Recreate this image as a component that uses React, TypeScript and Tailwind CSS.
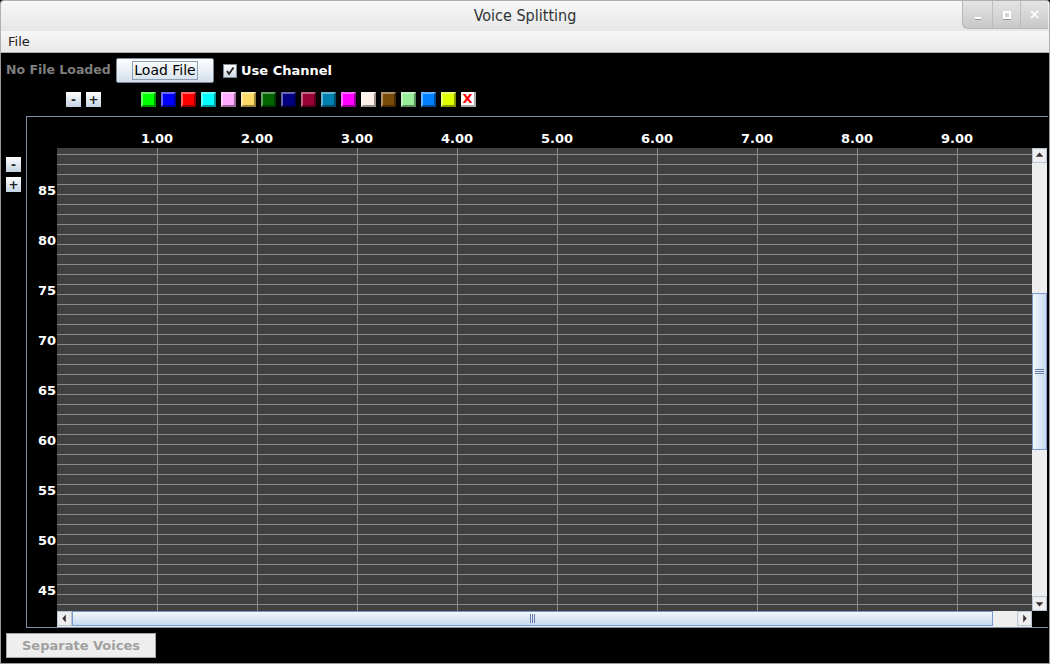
import React from "react";

const swatches = [
  "#00ff00", "#0000ff", "#ff0000", "#00ffff", "#ffaaff", "#ffd966",
  "#006400", "#000080", "#990033", "#0080b0", "#ff00ff", "#fff0ea",
  "#7a4a08", "#99ee99", "#0080ff", "#ddff00",
];

const cols = ["1.00", "2.00", "3.00", "4.00", "5.00", "6.00", "7.00", "8.00", "9.00"];
const rows = ["85", "80", "75", "70", "65", "60", "55", "50", "45"];

function MiniButton({ label }: { label: string }) {
  return (
    <div className="w-[15px] h-[15px] flex items-center justify-center bg-gradient-to-b from-white to-[#c5d3e2] text-[12px] font-bold leading-none text-[#222]">
      {label}
    </div>
  );
}

function Swatch({ color }: { color: string }) {
  return (
    <div
      className="w-[15px] h-[15px] border-t-2 border-l-2 border-b-2 border-r-2 border-t-white/40 border-l-white/40 border-b-black/40 border-r-black/40"
      style={{ backgroundColor: color }}
    />
  );
}

function Grid() {
  const w = 975;
  const h = 463;
  const hLines = [];
  for (let y = 6; y < h; y += 10) hLines.push(y);
  const vLines = [];
  for (let x = 100; x < w; x += 100) vLines.push(x);
  return (
    <svg width={w} height={h} className="block shrink-0">
      <rect width={w} height={h} fill="#404040" />
      {hLines.map((y) => (
        <line key={"h" + y} x1={0} x2={w} y1={y + 0.5} y2={y + 0.5} stroke="#8a8a8a" strokeWidth={1} />
      ))}
      {vLines.map((x) => (
        <line key={"v" + x} x1={x + 0.5} x2={x + 0.5} y1={0} y2={h} stroke="#8a8a8a" strokeWidth={1} />
      ))}
    </svg>
  );
}

function ArrowBtn({ dir }: { dir: "up" | "down" | "left" | "right" }) {
  const tri =
    dir === "up"
      ? "M3 9 L7.5 4 L12 9 Z"
      : dir === "down"
      ? "M3 6 L12 6 L7.5 11 Z"
      : dir === "left"
      ? "M9 3 L9 12 L5 7.5 Z"
      : "M6 3 L6 12 L10 7.5 Z";
  return (
    <div className="w-[15px] h-[15px] bg-[#eeeeee] border border-[#b8c4d0] shrink-0">
      <svg width="13" height="13" viewBox="0 0 15 15">
        <path d={tri} fill="#333" />
      </svg>
    </div>
  );
}

export default function App() {
  return (
    <div
      className="w-[1050px] h-[664px] flex flex-col bg-black overflow-hidden"
      style={{ fontFamily: '"DejaVu Sans", sans-serif' }}
    >
      {/* title bar */}
      <div className="h-[31px] shrink-0 relative flex items-center justify-center bg-gradient-to-b from-[#f8f8f8] to-[#e6e6e6] border-t border-l border-r border-[#b0b0b0] rounded-t-[4px]">
        <span
          className="text-[16px] text-[#2e3436]"
          style={{ fontFamily: '"DejaVu Sans Condensed", "DejaVu Sans", sans-serif' }}
        >
          Voice Splitting
        </span>
        <div className="absolute right-[1px] top-0 h-[28px] flex bg-gradient-to-b from-[#e4e4e4] to-[#c8c8c8] border-l border-b border-[#b5b5b5] rounded-bl-[6px]">
          <div className="w-[30px] flex items-end justify-center pb-[9px] border-r border-[#bdbdbd]">
            <div className="w-[6px] h-[2px] bg-white shadow-[0_1px_0_#999]" />
          </div>
          <div className="w-[28px] flex items-center justify-center border-r border-[#bdbdbd]">
            <div className="w-[8px] h-[8px] border-2 border-white shadow-[0_1px_0_#999]" />
          </div>
          <div className="w-[27px] flex items-center justify-center text-white text-[14px] font-bold">
            ×
          </div>
        </div>
      </div>

      {/* menu bar */}
      <div className="h-[22px] shrink-0 flex items-center px-[7px] bg-gradient-to-b from-[#f6f6f6] to-[#e9e9e9] border-l border-r border-b border-[#b0b0b0] text-[13px] text-[#222]">
        File
      </div>

      {/* content */}
      <div className="flex-1 flex flex-col border-l border-r border-b border-[#9a9a9a] text-white">
        <div className="h-[5px] shrink-0" />
        {/* top row */}
        <div className="h-[25px] shrink-0 flex items-center pl-[5px]">
          <span className="w-[104px] text-[12.5px] font-bold text-[#7f7f7f] whitespace-nowrap">No File Loaded</span>
          <div className="ml-[6px] w-[98px] h-[25px] flex items-center justify-center border border-[#7a8a99] bg-gradient-to-b from-white to-[#d4dfea] rounded-[2px]">
            <span className="px-[1px] leading-[17px] border border-[#8c9fb4] text-[14px] text-black">Load File</span>
          </div>
          <div className="ml-[9px] w-[14px] h-[14px] border border-[#7a8a99] bg-gradient-to-b from-white to-[#ccd8e4] flex items-center justify-center">
            <svg width="10" height="10" viewBox="0 0 10 10">
              <path d="M2 5 L4 8 L8.5 1.5" stroke="#222" strokeWidth="1.8" fill="none" />
            </svg>
          </div>
          <span className="ml-[4px] text-[13px] font-bold text-white">Use Channel</span>
        </div>

        {/* colour row */}
        <div className="h-[15px] shrink-0 mt-[9px] flex items-center">
          <div className="ml-[65px] flex gap-[5px]">
            <MiniButton label="-" />
            <MiniButton label="+" />
          </div>
          <div className="ml-[40px] flex gap-[5px]">
            {swatches.map((c) => (
              <Swatch key={c} color={c} />
            ))}
            <div className="w-[15px] h-[15px] bg-white border-r-2 border-b-2 border-[#aaaaaa] flex items-center justify-center text-[#ff0000] text-[13px] font-bold leading-none">
              X
            </div>
          </div>
        </div>

        {/* main area */}
        <div className="flex shrink-0 mt-[9px]">
          <div className="w-[25px] pl-[5px] pt-[41px] flex flex-col gap-[5px]">
            <MiniButton label="-" />
            <MiniButton label="+" />
          </div>
          <div className="w-[1022px] h-[512px] border-t border-l border-b border-[#7f8fa3] flex flex-col">
            {/* column header */}
            <div className="h-[31px] shrink-0 flex items-end pb-[3px] pl-[80px]">
              {cols.map((c) => (
                <div key={c} className="w-[100px] text-center text-[13px] font-bold leading-none">
                  {c}
                </div>
              ))}
            </div>
            <div className="flex">
              {/* row header */}
              <div className="w-[30px] h-[479px] overflow-hidden flex flex-col pt-[36px] pr-[1px]">
                {rows.map((r) => (
                  <div key={r} className="h-[50px] shrink-0 text-right text-[13px] font-bold leading-[13px]">
                    {r}
                  </div>
                ))}
              </div>
              <div className="flex flex-col">
                <div className="flex">
                  <Grid />
                  {/* vertical scrollbar */}
                  <div className="w-[15px] h-[463px] flex flex-col bg-[#eeeeee]">
                    <ArrowBtn dir="up" />
                    <div className="flex-1 flex flex-col">
                      <div className="h-[130px]" />
                      <div className="h-[157px] border border-[#7a9ad0] bg-gradient-to-r from-[#f4f8fc] via-[#dce8f6] to-[#c8daf0] flex items-center justify-center">
                        <div className="flex flex-col gap-[1px]">
                          <div className="w-[9px] h-[1px] bg-[#6a7fae]" />
                          <div className="w-[9px] h-[1px] bg-[#6a7fae]" />
                          <div className="w-[9px] h-[1px] bg-[#6a7fae]" />
                        </div>
                      </div>
                    </div>
                    <ArrowBtn dir="down" />
                  </div>
                </div>
                {/* horizontal scrollbar */}
                <div className="h-[16px] flex">
                  <div className="w-[975px] flex bg-[#eeeeee]">
                    <ArrowBtn dir="left" />
                    <div className="w-[921px] h-[15px] border border-[#7a9ad0] bg-gradient-to-b from-[#f4f8fc] via-[#dce8f6] to-[#c8daf0] flex items-center justify-center">
                      <div className="flex gap-[1px]">
                        <div className="w-[1px] h-[9px] bg-[#6a7fae]" />
                        <div className="w-[1px] h-[9px] bg-[#6a7fae]" />
                        <div className="w-[1px] h-[9px] bg-[#6a7fae]" />
                      </div>
                    </div>
                    <div className="flex-1" />
                    <ArrowBtn dir="right" />
                  </div>
                  <div className="w-[15px] bg-black" />
                </div>
              </div>
            </div>
          </div>
        </div>

        {/* bottom */}
        <div className="pl-[5px] pt-[5px]">
          <div className="w-[150px] h-[25px] flex items-center justify-center border border-[#a6a6a6] bg-[#eeeeee] text-[13px] font-bold text-[#a0a0a0]">
            Separate Voices
          </div>
        </div>
      </div>
    </div>
  );
}
